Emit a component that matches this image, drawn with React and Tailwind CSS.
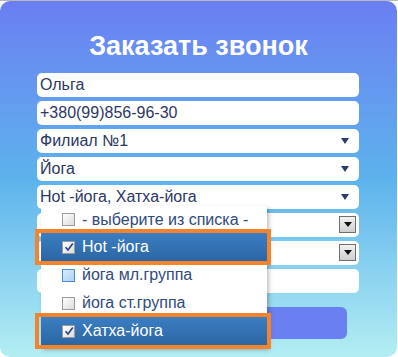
import React from 'react';

const font = { fontFamily: '"Liberation Sans", Arial, sans-serif' };

const Check = ({ checked, hover }) => (
    <span
        className={
            "w-[13px] h-[13px] shrink-0 border flex items-center justify-center " +
            (hover
                ? "border-[#4a90d0] bg-gradient-to-br from-[#d8ecfb] to-[#a9d2f3]"
                : "border-[#9a9a9a] bg-gradient-to-br from-[#ffffff] to-[#dcdcdc]")
        }
    >
        {checked && (
            <svg width="10" height="10" viewBox="0 0 10 10">
                <path d="M1.5 5.2 L4 8 L8.8 1.5" fill="none" stroke="#2a3f8a" strokeWidth="1.6" />
            </svg>
        )}
    </span>
);

const Field = ({ children, arrow, native }) => (
    <div className="relative h-6 bg-white rounded-[5px] flex items-center pl-[3px] text-[16px] text-[#2c3763] leading-none">
        <span>{children}</span>
        {arrow && (
            <svg className="absolute right-[10px] top-[9px]" width="8" height="6" viewBox="0 0 8 6">
                <path d="M0 0 H8 L4 6 Z" fill="#2b3d6b" />
            </svg>
        )}
        {native && (
            <span className="absolute right-[3px] top-[3px] w-[17px] h-[17px] border border-[#6f6f6f] bg-gradient-to-b from-[#f2f2f2] to-[#cfcfcf] flex items-center justify-center">
                <svg width="8" height="5" viewBox="0 0 8 5">
                    <path d="M0 0 H8 L4 5 Z" fill="#111" />
                </svg>
            </span>
        )}
    </div>
);

const Option = ({ label, checked, active, hover, first }) => (
    <div
        className={
            "relative flex items-center gap-[7px] pl-[21px] text-[16px] leading-none " +
            (first ? "h-[27px] " : "h-[28px] ") +
            (active
                ? "bg-gradient-to-b from-[#3b7ec2] to-[#2b66a4] text-white"
                : "text-[#2f4a7c]")
        }
    >
        <Check checked={checked} hover={hover} />
        <span>{label}</span>
        {active && (
            <span className="absolute -top-[4px] -bottom-[4px] -left-[6px] -right-[4px] border-[4px] border-[#f5832b] z-10 pointer-events-none" />
        )}
    </div>
);

export default function App() {
    return (
        <div className="w-[398px] h-[357px] bg-white border-t border-[#b9b9b9] overflow-hidden" style={font}>
            <div className="w-[397px] h-[356px] rounded-[10px] bg-gradient-to-b from-[#6a7ef2] via-[#5cb3ec] to-[#b3eef2] flex flex-col items-center pt-[32px]">
                <h1 className="text-[27px] leading-none font-bold text-white mb-[13px]">Заказать звонок</h1>
                <div className="relative w-[322px] flex flex-col gap-1 -ml-[1px]">
                    <Field>Ольга</Field>
                    <Field>+380(99)856-96-30</Field>
                    <Field arrow>Филиал №1</Field>
                    <Field arrow>Йога</Field>
                    <Field arrow>Hot -йога, Хатха-йога</Field>
                    <Field native></Field>
                    <Field native></Field>
                    <Field></Field>
                    <button className="mt-[10px] self-center w-[298px] h-[32px] rounded-[6px] bg-[#6a7ff2]"></button>

                    {/* Open multiselect */}
                    <div className="absolute left-[4px] top-[133px] w-[226px] bg-white shadow-[2px_2px_4px_rgba(0,0,0,0.25)] pb-[3px]">
                        <Option first label="- выберите из списка -" />
                        <Option active checked label="Hot -йога" />
                        <Option hover label="йога мл.группа" />
                        <Option label="йога ст.группа" />
                        <Option active checked label="Хатха-йога" />
                    </div>
                </div>
            </div>
        </div>
    );
}
